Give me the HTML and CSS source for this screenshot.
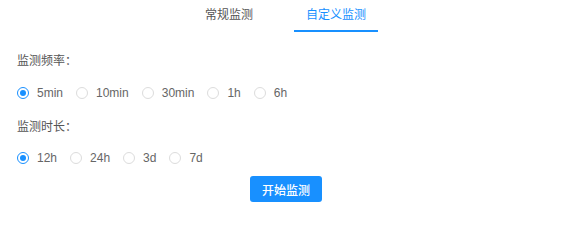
FILE: index.html
```html
<!DOCTYPE html>
<html lang="zh-CN">
<head>
<meta charset="utf-8">
<title>监测</title>
<link rel="stylesheet" href="styles.css">
</head>
<body>
<div class="page">
  <div class="tabs">
    <div class="tab">常规监测</div>
    <div class="tab active">自定义监测</div>
  </div>
  <div class="form">
    <div class="label label-first">监测频率：</div>
    <div class="radio-group row-first">
      <label class="radio checked"><span class="dot"></span><span class="text">5min</span></label>
      <label class="radio"><span class="dot"></span><span class="text">10min</span></label>
      <label class="radio"><span class="dot"></span><span class="text">30min</span></label>
      <label class="radio"><span class="dot"></span><span class="text">1h</span></label>
      <label class="radio"><span class="dot"></span><span class="text">6h</span></label>
    </div>
    <div class="label label-second">监测时长：</div>
    <div class="radio-group row-second">
      <label class="radio checked"><span class="dot"></span><span class="text">12h</span></label>
      <label class="radio"><span class="dot"></span><span class="text">24h</span></label>
      <label class="radio"><span class="dot"></span><span class="text">3d</span></label>
      <label class="radio"><span class="dot"></span><span class="text">7d</span></label>
    </div>
    <div class="actions">
      <button class="btn-primary" type="button">开始监测</button>
    </div>
  </div>
</div>
</body>
</html>
```
FILE: styles.css
```css
html, body {
  margin: 0;
  padding: 0;
  background: #ffffff;
}
body {
  font-family: "Liberation Sans", "Noto Sans CJK SC", sans-serif;
  font-size: 12px;
  color: #555;
}
.page {
  width: 577px;
  height: 220px;
  overflow: hidden;
}
.tabs {
  display: flex;
  justify-content: center;
  gap: 29px;
  padding-right: 6px;
  height: 32px;
}
.tab {
  padding: 8px 12px 0;
  line-height: 14px;
  height: 22px;
  color: #555;
  border-bottom: 2px solid transparent;
}
.tab.active {
  color: #1890ff;
  border-bottom-color: #1890ff;
}
.form {
  padding-left: 17px;
}
.label {
  line-height: 16px;
  height: 16px;
  color: #555;
}
.label-first { margin-top: 21px; }
.label-second { margin-top: 18px; }
.radio-group {
  display: flex;
  align-items: center;
  height: 16px;
}
.row-first { margin-top: 16px; }
.row-second { margin-top: 15px; }
.radio {
  display: flex;
  align-items: center;
  margin-right: 13px;
  color: #666;
  line-height: 16px;
}
.dot {
  box-sizing: border-box;
  width: 12px;
  height: 12px;
  border: 1px solid #dcdcdc;
  border-radius: 50%;
  margin-right: 8px;
  display: flex;
  align-items: center;
  justify-content: center;
  background: #fff;
}
.radio.checked .dot {
  border-color: #1890ff;
}
.radio.checked .dot::after {
  content: "";
  width: 6px;
  height: 6px;
  border-radius: 50%;
  background: #1890ff;
}
.actions {
  display: flex;
  justify-content: center;
  margin-top: 10px;
  padding-right: 22px;
}
.btn-primary {
  width: 72px;
  height: 26px;
  border: none;
  border-radius: 3px;
  background: #1890ff;
  color: #fff;
  font-family: "Liberation Sans", "Noto Sans CJK SC", sans-serif;
  font-size: 12px;
  font-weight: 500;
  padding: 0;
}
```
